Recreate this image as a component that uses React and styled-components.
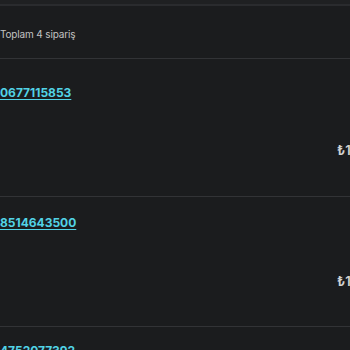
import React from "react";
import styled, { createGlobalStyle } from "styled-components";

const GlobalStyle = createGlobalStyle`
  html, body {
    margin: 0;
    padding: 0;
    background: #1b1c1e;
    overflow: hidden;
  }
  body {
    font-family: Inter, "Noto Sans", sans-serif;
  }
`;

const orders = [
  { id: "0677115853", price: "₺1.249,90", height: 137, linkTop: 25, priceTop: 84 },
  { id: "8514643500", price: "₺1.099,00", height: 129, linkTop: 17, priceTop: 77 },
  { id: "4752077392", price: "₺899,00", height: 129, linkTop: 15, priceTop: 80 },
];

function App() {
  return (
    <>
      <GlobalStyle />
      <Wrapper>
        <TopBar />
        <Summary>Toplam 4 sipariş</Summary>
        {orders.map((o) => (
          <OrderRow key={o.id} $height={o.height}>
            <IdCell $top={o.linkTop}>
              <OrderLink href="#">{o.id}</OrderLink>
            </IdCell>
            <PriceCell $top={o.priceTop}>{o.price}</PriceCell>
          </OrderRow>
        ))}
      </Wrapper>
    </>
  );
}

const Wrapper = styled.div`
  width: 350px;
  height: 350px;
  overflow: hidden;
  background: #1b1c1e;
`;

const TopBar = styled.div`
  height: 4px;
  background: #1f2022;
  border-bottom: 2px solid #2a2b2e;
`;

const Summary = styled.div`
  height: 53px;
  display: flex;
  align-items: center;
  padding-top: 3px;
  box-sizing: border-box;
  font-size: 10px;
  letter-spacing: -0.15px;
  color: #c2c2c2;
  border-bottom: 1px solid #323336;
  white-space: nowrap;
`;

const OrderRow = styled.div`
  height: ${(p) => p.$height}px;
  display: flex;
  border-bottom: 1px solid #323336;
`;

const IdCell = styled.div`
  flex: 0 0 337px;
  padding-top: ${(p) => p.$top}px;
  line-height: 15px;
`;

const OrderLink = styled.a`
  font-size: 12px;
  font-weight: 700;
  color: #52d3e6;
  text-decoration: underline;
  text-underline-offset: 2px;
`;

const PriceCell = styled.div`
  padding-top: ${(p) => p.$top}px;
  line-height: 15px;
  font-size: 13px;
  font-weight: 600;
  color: #d2d2d2;
  white-space: nowrap;
`;

export default App;
